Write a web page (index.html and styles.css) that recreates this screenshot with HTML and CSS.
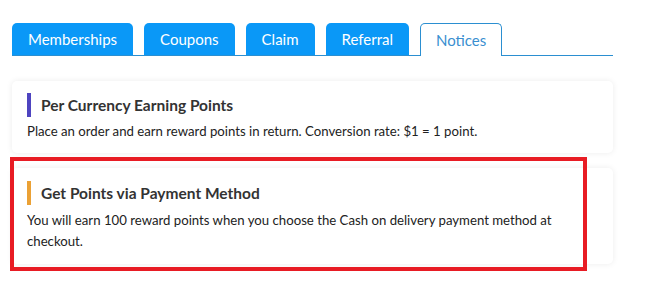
FILE: index.html
```html
<!DOCTYPE html>
<html>
<head>
<meta charset="utf-8">
<link rel="stylesheet" href="styles.css">
</head>
<body>
<div class="page">
  <nav class="tabs">
    <div class="tab">Memberships</div>
    <div class="tab">Coupons</div>
    <div class="tab">Claim</div>
    <div class="tab">Referral</div>
    <div class="tab active">Notices</div>
  </nav>
  <div class="notices">
    <section class="card">
      <h3 class="card-title"><span class="bar bar-indigo"></span>Per Currency Earning Points</h3>
      <p class="card-text">Place an order and earn reward points in return. Conversion rate: $1 = 1 point.</p>
    </section>
    <section class="card">
      <h3 class="card-title"><span class="bar bar-orange"></span>Get Points via Payment Method</h3>
      <p class="card-text">You will earn 100 reward points when you choose the Cash on delivery payment method at checkout.</p>
    </section>
    <div class="highlight"></div>
  </div>
</div>
</body>
</html>
```

FILE: styles.css
```css
html, body {
  margin: 0;
  padding: 0;
  background: #ffffff;
}
body {
  min-height: 284px;
  font-family: "Lato", "Liberation Sans", sans-serif;
  color: #222222;
}
.page {
  width: 601px;
  margin-left: 12px;
  padding-top: 23px;
  padding-bottom: 20px;
}
.tabs {
  display: flex;
  gap: 11px;
  border-bottom: 1px solid #2b8fd1;
  height: 32px;
}
.tab {
  height: 32px;
  box-sizing: border-box;
  padding: 0 16px;
  display: flex;
  align-items: center;
  background: #0a98f7;
  color: #ffffff;
  font-size: 15px;
  border-radius: 5px 5px 0 0;
}
.tab.active {
  background: #ffffff;
  color: #3a8fd0;
  border: 1px solid #2b8fd1;
  border-bottom: none;
  height: 33px;
  padding: 0 15px;
}
.notices {
  position: relative;
  display: flex;
  flex-direction: column;
  gap: 15px;
  margin-top: 25px;
}
.card {
  background: #ffffff;
  border-radius: 5px;
  box-shadow: 0 0 6px rgba(0, 0, 0, 0.08);
  padding: 12px 15px 11px 15px;
}
.card-title {
  margin: 0 0 4px 0;
  display: flex;
  align-items: center;
  gap: 10px;
  height: 24px;
  font-size: 15.5px;
  font-weight: 700;
  color: #333333;
}
.bar {
  width: 4px;
  height: 24px;
  flex: none;
}
.bar-indigo { background: #4e44c0; }
.bar-orange { background: #eba135; }
.card + .card {
  padding-top: 13px;
  padding-bottom: 12px;
}
.card + .card .card-text {
  margin-top: 5px;
}
.card-text {
  margin: 0;
  font-size: 13.2px;
  line-height: 21px;
  color: #222222;
}
.highlight {
  position: absolute;
  left: -2px;
  top: 76px;
  width: 569px;
  height: 106px;
  border: 4px solid #e81c24;
  pointer-events: none;
}
```
